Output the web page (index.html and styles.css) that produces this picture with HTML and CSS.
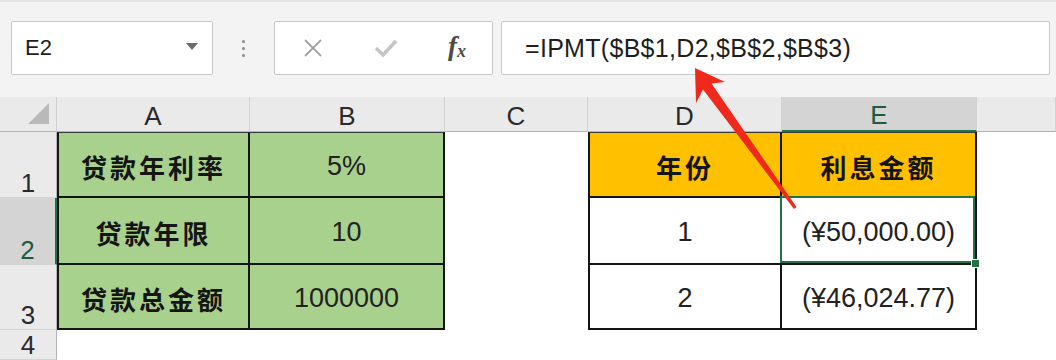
FILE: index.html
```html
<!DOCTYPE html>
<html lang="zh-CN">
<head>
    <meta charset="UTF-8">
    <title>IPMT 利息计算</title>
    <link rel="stylesheet" href="styles.css">
</head>
<body>
    <div class="app">
        <div class="toolbar">
            <div class="namebox">
                <span>E2</span>
                <span class="caret"></span>
            </div>
            <div class="grip"><i></i><i></i><i></i></div>
            <div class="fn-buttons">
                <svg class="icon" width="22" height="22" viewBox="0 0 22 22">
                    <path d="M3 3 L19 19 M19 3 L3 19" stroke="#a2a2a2" stroke-width="1.8" fill="none"/>
                </svg>
                <svg class="icon" width="26" height="22" viewBox="0 0 26 22">
                    <path d="M3 11 L10 18 L23 4" stroke="#c4c4c4" stroke-width="3.4" fill="none"/>
                </svg>
                <span class="fx"><i>f</i><sub>x</sub></span>
            </div>
            <div class="formula">=IPMT($B$1,D2,$B$2,$B$3)</div>
        </div>

        <div class="sheet">
            <div class="corner"><span class="tri"></span></div>
            <div class="colhdr">A</div>
            <div class="colhdr">B</div>
            <div class="colhdr">C</div>
            <div class="colhdr">D</div>
            <div class="colhdr active">E</div>
            <div class="colhdr"></div>

            <div class="rowhdr">1</div>
            <div class="cell green first-col top-row label">贷款年利率</div>
            <div class="cell green top-row num">5%</div>
            <div class="empty"></div>
            <div class="cell orange first-col top-row label">年份</div>
            <div class="cell orange top-row label">利息金额</div>
            <div class="empty"></div>

            <div class="rowhdr active">2</div>
            <div class="cell green first-col label">贷款年限</div>
            <div class="cell green num">10</div>
            <div class="empty"></div>
            <div class="cell first-col num">1</div>
            <div class="cell num selected">(¥50,000.00)<span class="handle"></span></div>
            <div class="empty"></div>

            <div class="rowhdr">3</div>
            <div class="cell green first-col label">贷款总金额</div>
            <div class="cell green num">1000000</div>
            <div class="empty"></div>
            <div class="cell first-col num">2</div>
            <div class="cell num">(¥46,024.77)</div>
            <div class="empty"></div>

            <div class="rowhdr">4</div>
            <div class="empty"></div>
            <div class="empty"></div>
            <div class="empty"></div>
            <div class="empty"></div>
            <div class="empty"></div>
            <div class="empty"></div>
        </div>

        <svg class="arrow" width="1056" height="360" viewBox="0 0 1056 360">
            <polygon points="695,68 725,82 711.5,83.5 796.5,207 794,209 703,89.5 696,103" fill="#f0291d"/>
        </svg>
    </div>
</body>
</html>
```

FILE: styles.css
```css
body {
    margin: 0;
    font-family: 'Liberation Sans', Arial, sans-serif;
    color: #222222;
    background: #ffffff;
}

.app {
    position: relative;
    width: 1056px;
    height: 360px;
    overflow: hidden;
}

/* formula bar */
.toolbar {
    display: flex;
    align-items: flex-start;
    height: 97px;
    box-sizing: border-box;
    padding: 21px 6px 0 11px;
    background: #f3f3f3;
    border-top: 2px solid #e4e4e4;
}

.namebox,
.fn-buttons,
.formula {
    height: 54px;
    box-sizing: border-box;
    margin-top: -2px;
    background: #ffffff;
    border: 1px solid #c9c9c9;
    border-radius: 2px;
    display: flex;
    align-items: center;
}

.namebox {
    width: 202px;
    padding: 0 14px 0 13px;
    justify-content: space-between;
    font-size: 22px;
    color: #1e1e1e;
}

.caret {
    width: 0;
    height: 0;
    border-left: 6px solid transparent;
    border-right: 6px solid transparent;
    border-top: 7px solid #6a6a6a;
    margin-top: -4px;
}

.grip {
    width: 61px;
    height: 54px;
    margin-top: -2px;
    display: flex;
    flex-direction: column;
    align-items: center;
    justify-content: center;
    gap: 4px;
}

.grip i {
    width: 3px;
    height: 3px;
    border-radius: 50%;
    background: #8a8a8a;
}

.fn-buttons {
    width: 219px;
    padding: 0 26px 0 27px;
    justify-content: space-between;
}

.fx {
    font-family: 'Liberation Serif', serif;
    font-size: 27px;
    font-weight: bold;
    color: #4a4a4a;
    margin-top: -4px;
}

.fx sub {
    font-style: italic;
    font-size: 18px;
    vertical-align: -2px;
}

.formula {
    flex: 1;
    margin-left: 8px;
    padding-left: 23px;
    font-size: 25px;
    letter-spacing: 0.3px;
    color: #1e1e1e;
}

/* sheet grid */
.sheet {
    display: grid;
    grid-template-columns: 57px 193px 195px 143px 194px 195px 1fr;
    grid-template-rows: 35px 66px 67px 65px 1fr;
    height: 263px;
}

.corner,
.colhdr,
.rowhdr {
    background: #eaeaea;
    box-sizing: border-box;
    color: #2a2a2a;
    font-size: 26px;
}

.corner {
    position: relative;
    border-right: 1px solid #cfcfcf;
    border-bottom: 1px solid #b4b4b4;
}

.tri {
    position: absolute;
    right: 7px;
    bottom: 7px;
    width: 0;
    height: 0;
    border-left: 21px solid transparent;
    border-bottom: 21px solid #b9b9b9;
}

.colhdr {
    display: flex;
    align-items: center;
    justify-content: center;
    padding-top: 4px;
    border-right: 1px solid #d2d2d2;
    border-bottom: 1px solid #b4b4b4;
}

.colhdr.active {
    background: #d4d4d4;
    color: #1d5c3b;
    border-bottom: 2px solid #217346;
}

.rowhdr {
    display: flex;
    align-items: flex-end;
    justify-content: center;
    line-height: 26px;
    padding-bottom: 1px;
    border-right: 1px solid #b4b4b4;
    border-bottom: 1px solid #d2d2d2;
}

.rowhdr.active {
    background: #d4d4d4;
    color: #1d5c3b;
    border-right: 2px solid #217346;
}

.cell {
    position: relative;
    box-sizing: border-box;
    display: flex;
    align-items: center;
    justify-content: center;
    padding-top: 4px;
    border-right: 2px solid #141414;
    border-bottom: 2px solid #141414;
    background: #ffffff;
}

.cell.first-col {
    border-left: 2px solid #141414;
}

.cell.top-row {
    border-top: 1px solid #3a3a3a;
}

.cell.green {
    background: #a9d18e;
}

.cell.orange {
    background: #ffc000;
}

.label {
    font-family: 'Noto Sans CJK SC', sans-serif;
    font-weight: bold;
    font-size: 26px;
    letter-spacing: 3px;
    color: #151515;
}

.num {
    font-size: 27px;
    color: #222222;
}

.selected::after {
    content: '';
    position: absolute;
    top: -2px;
    left: -2px;
    right: 0;
    bottom: 0;
    border: 2px solid #217346;
}

.handle {
    position: absolute;
    right: -5px;
    bottom: -5px;
    width: 7px;
    height: 7px;
    background: #217346;
    border: 1px solid #ffffff;
    z-index: 1;
}

.empty {
    background: #ffffff;
}

.arrow {
    position: absolute;
    left: 0;
    top: 0;
    pointer-events: none;
}
```
